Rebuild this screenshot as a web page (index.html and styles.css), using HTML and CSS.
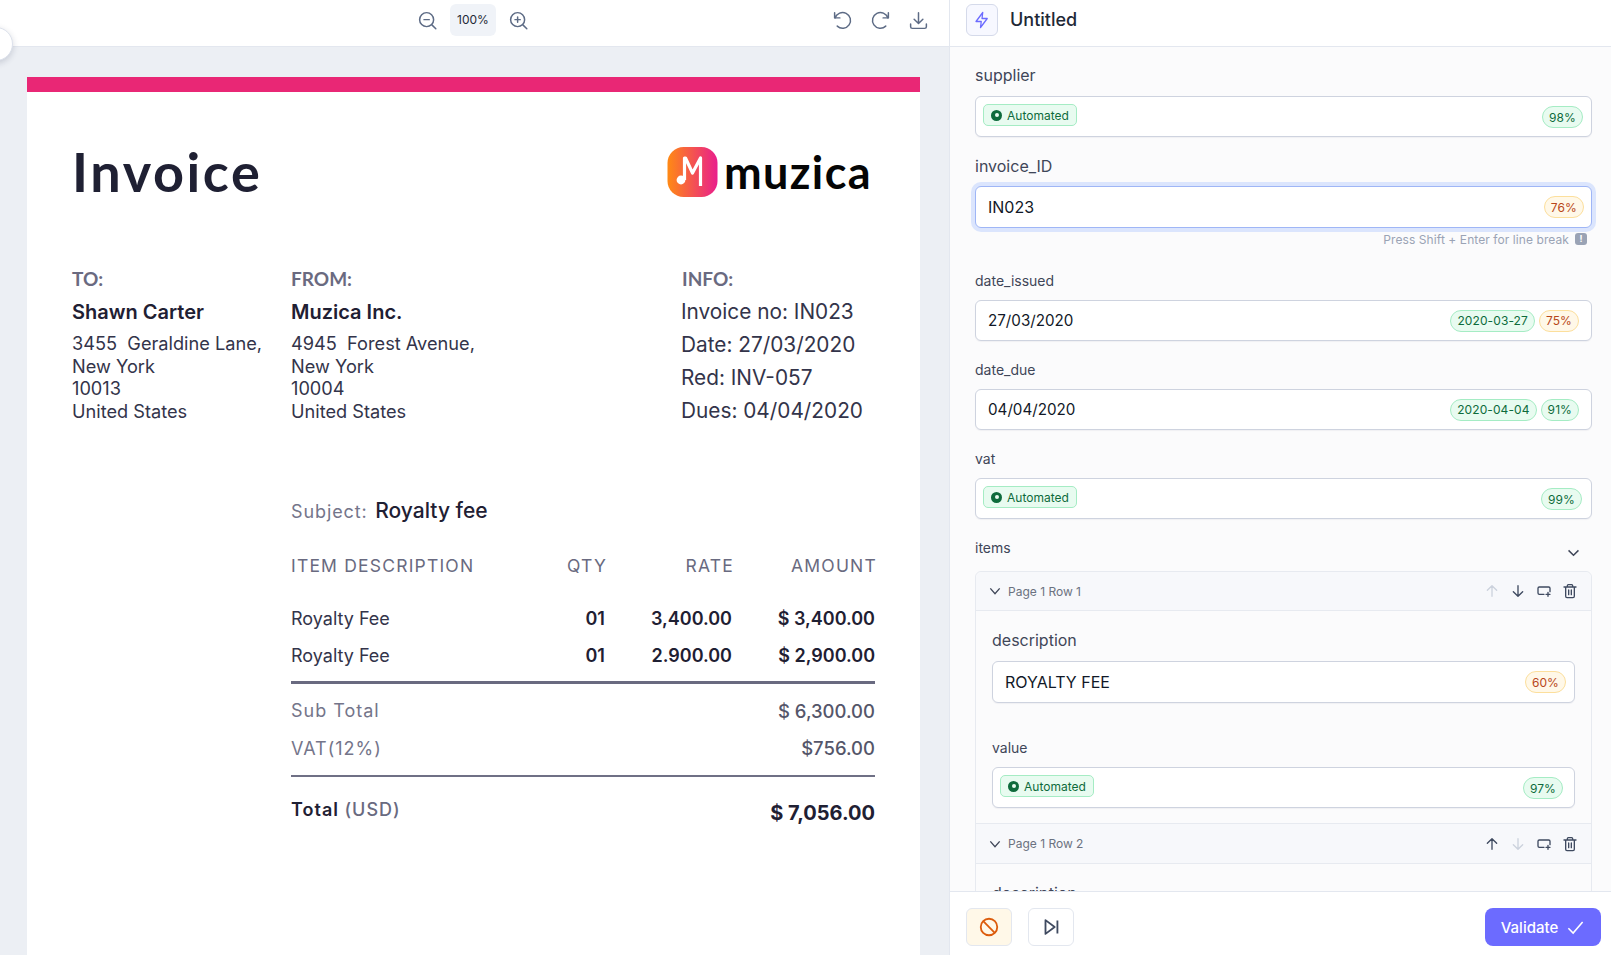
FILE: index.html
```html
<!DOCTYPE html>
<html lang="en">
<head>
    <meta charset="UTF-8">
    <meta name="viewport" content="width=device-width, initial-scale=1.0">
    <title>Invoice review</title>
    <link rel="stylesheet" href="styles.css">
</head>
<body>
    <div class="app">
        <section class="viewer">
            <div class="collapse-handle"></div>
            <div class="toolbar">
                <div class="zoom-tools">
                    <svg class="tool-icon" viewBox="0 0 24 24"><circle cx="11" cy="11" r="8"/><path d="M8 11h6M17 17l4.5 4.5"/></svg>
                    <span class="zoom-value">100%</span>
                    <svg class="tool-icon" viewBox="0 0 24 24"><circle cx="11" cy="11" r="8"/><path d="M8 11h6M11 8v6M17 17l4.5 4.5"/></svg>
                </div>
                <div class="page-tools">
                    <svg class="tool-icon" viewBox="0 0 24 24"><path d="M3 3v6h6"/><path d="M3.6 9A9 9 0 1 1 6 18.4"/></svg>
                    <svg class="tool-icon" viewBox="0 0 24 24"><path d="M21 3v6h-6"/><path d="M20.4 9A9 9 0 1 0 18 18.4"/></svg>
                    <svg class="tool-icon" viewBox="0 0 24 24"><path d="M12 3v12M7 10.5l5 5 5-5"/><path d="M3 16v3a2 2 0 0 0 2 2h14a2 2 0 0 0 2-2v-3"/></svg>
                </div>
            </div>
            <div class="canvas">
                <div class="invoice">
                    <div class="invoice-bar"></div>
                    <div class="invoice-body">
                        <div class="invoice-top">
                            <h1 class="invoice-title">Invoice</h1>
                            <div class="logo">
                                <svg class="logo-mark" viewBox="0 0 50 50">
                                    <defs>
                                        <linearGradient id="logo-grad" x1="0" y1="0" x2="1" y2="0">
                                            <stop offset="0" stop-color="#ff8a14"/>
                                            <stop offset="1" stop-color="#e91e8c"/>
                                        </linearGradient>
                                    </defs>
                                    <rect width="50" height="50" rx="16" fill="url(#logo-grad)"/>
                                    <path d="M17 33V11h1l7 15 8-15v28" fill="none" stroke="#fff" stroke-width="3.2" stroke-linejoin="round"/>
                                    <circle cx="13.500" cy="33" r="4.400" fill="#fff"/>
                                </svg>
                                <span class="logo-name">muzica</span>
                            </div>
                        </div>

                        <div class="parties">
                            <div>
                                <div class="party-head">TO:</div>
                                <div class="party-name">Shawn Carter</div>
                                <div class="party-addr">3455&nbsp; Geraldine Lane,<br>New York<br>10013<br>United States</div>
                            </div>
                            <div>
                                <div class="party-head">FROM:</div>
                                <div class="party-name">Muzica Inc.</div>
                                <div class="party-addr">4945&nbsp; Forest Avenue,<br>New York<br>10004<br>United States</div>
                            </div>
                            <div>
                                <div class="party-head">INFO:</div>
                                <div class="info-lines">Invoice no: IN023<br>Date: 27/03/2020<br>Red: INV-057<br>Dues: 04/04/2020</div>
                            </div>
                        </div>

                        <div class="subject"><span class="subject-label">Subject:</span> Royalty fee</div>

                        <table class="lines">
                            <thead>
                                <tr>
                                    <th>ITEM DESCRIPTION</th>
                                    <th class="num"><span class="th-text">QTY</span></th>
                                    <th class="num"><span class="th-text">RATE</span></th>
                                    <th class="num"><span class="th-text">AMOUNT</span></th>
                                </tr>
                            </thead>
                            <tbody>
                                <tr>
                                    <td>Royalty Fee</td>
                                    <td class="num strong">01</td>
                                    <td class="num strong">3,400.00</td>
                                    <td class="num strong">$ 3,400.00</td>
                                </tr>
                                <tr>
                                    <td>Royalty Fee</td>
                                    <td class="num strong">01</td>
                                    <td class="num strong">2.900.00</td>
                                    <td class="num strong">$ 2,900.00</td>
                                </tr>
                            </tbody>
                        </table>

                        <div class="totals">
                            <div class="total-row"><span class="total-label">Sub Total</span><span class="total-value">$ 6,300.00</span></div>
                            <div class="total-row"><span class="total-label">VAT(12%)</span><span class="total-value">$756.00</span></div>
                        </div>
                        <div class="grand-total">
                            <span class="grand-label">Total <span class="grand-unit">(USD)</span></span>
                            <span class="grand-value">$ 7,056.00</span>
                        </div>
                    </div>
                </div>
            </div>
        </section>

        <aside class="sidebar">
            <div class="side-head">
                <span class="bolt-box">
                    <svg viewBox="0 0 24 24"><path d="M13 2 4 14h7l-1 8 9-12h-7z"/></svg>
                </span>
                <span class="doc-name">Untitled</span>
            </div>

            <div class="side-scroll">
                <label class="label label-big label-first">supplier</label>
                <div class="box box-auto">
                    <span class="auto-tag"><i class="auto-dot"></i>Automated</span>
                    <span class="pill good pill-supplier">98%</span>
                </div>

                <label class="label label-big label-invoice">invoice_ID</label>
                <div class="box box-focus">
                    <span class="box-text">IN023</span>
                    <span class="pill warn pill-invoice">76%</span>
                </div>
                <div class="hint">Press Shift + Enter for line break <i class="hint-key">!</i></div>

                <label class="label label-issued">date_issued</label>
                <div class="box">
                    <span class="box-text">27/03/2020</span>
                    <span class="pill good">2020-03-27</span>
                    <span class="pill warn">75%</span>
                </div>

                <label class="label">date_due</label>
                <div class="box">
                    <span class="box-text">04/04/2020</span>
                    <span class="pill good">2020-04-04</span>
                    <span class="pill good">91%</span>
                </div>

                <label class="label">vat</label>
                <div class="box box-auto">
                    <span class="auto-tag"><i class="auto-dot"></i>Automated</span>
                    <span class="pill good pill-vat">99%</span>
                </div>

                <div class="items-head">
                    <label class="label label-items">items</label>
                    <svg class="items-chev" viewBox="0 0 24 24"><path d="m5 9 7 7 7-7"/></svg>
                </div>

                <div class="items-card">
                    <div class="row-head">
                        <svg class="row-chev" viewBox="0 0 24 24"><path d="m5 8 7 8 7-8"/></svg>
                        <span class="row-title">Page 1 Row 1</span>
                        <div class="row-tools">
                            <svg class="row-icon muted" viewBox="0 0 24 24"><path d="M12 20V5M5 11l7-7 7 7"/></svg>
                            <svg class="row-icon" viewBox="0 0 24 24"><path d="M12 4v15M5 13l7 7 7-7"/></svg>
                            <svg class="row-icon" viewBox="0 0 24 24"><path d="M12 17H5a2 2 0 0 1-2-2V8a2 2 0 0 1 2-2h14a2 2 0 0 1 2 2v5"/><path d="M18 14v6M15 17h6"/></svg>
                            <svg class="row-icon" viewBox="0 0 24 24"><path d="M3 6h18M8 6V4a1.5 1.5 0 0 1 1.5-1.5h5A1.5 1.5 0 0 1 16 4v2M5.5 6v14A2 2 0 0 0 7.500 22h9a2 2 0 0 0 2-2V6M10 10.500v7M14 10.500v7"/></svg>
                        </div>
                    </div>
                    <div class="row-body">
                        <label class="label label-big label-desc">description</label>
                        <div class="box box-tall">
                            <span class="box-text">ROYALTY FEE</span>
                            <span class="pill warn pill-desc">60%</span>
                        </div>
                        <label class="label label-value">value</label>
                        <div class="box box-auto">
                            <span class="auto-tag"><i class="auto-dot"></i>Automated</span>
                            <span class="pill good">97%</span>
                        </div>
                    </div>
                    <div class="row-head row-head-2">
                        <svg class="row-chev" viewBox="0 0 24 24"><path d="m5 8 7 8 7-8"/></svg>
                        <span class="row-title">Page 1 Row 2</span>
                        <div class="row-tools">
                            <svg class="row-icon" viewBox="0 0 24 24"><path d="M12 20V5M5 11l7-7 7 7"/></svg>
                            <svg class="row-icon muted" viewBox="0 0 24 24"><path d="M12 4v15M5 13l7 7 7-7"/></svg>
                            <svg class="row-icon" viewBox="0 0 24 24"><path d="M12 17H5a2 2 0 0 1-2-2V8a2 2 0 0 1 2-2h14a2 2 0 0 1 2 2v5"/><path d="M18 14v6M15 17h6"/></svg>
                            <svg class="row-icon" viewBox="0 0 24 24"><path d="M3 6h18M8 6V4a1.5 1.5 0 0 1 1.5-1.5h5A1.5 1.5 0 0 1 16 4v2M5.5 6v14A2 2 0 0 0 7.500 22h9a2 2 0 0 0 2-2V6M10 10.500v7M14 10.500v7"/></svg>
                        </div>
                    </div>
                    <div class="row-body">
                        <label class="label label-big label-desc">description</label>
                    </div>
                </div>
            </div>

            <div class="side-foot">
                <button class="foot-btn foot-block" type="button">
                    <svg viewBox="0 0 24 24"><circle cx="12" cy="12" r="9"/><path d="m5.700 5.700 12.600 12.600"/></svg>
                </button>
                <button class="foot-btn foot-skip" type="button">
                    <svg viewBox="0 0 24 24"><path d="M6 4.500v15L16 12zM19 5v14"/></svg>
                </button>
                <button class="validate" type="button">
                    Validate
                    <svg viewBox="0 0 24 24"><path d="m3 13 6 6L21 5"/></svg>
                </button>
            </div>
        </aside>
    </div>
</body>
</html>
```

FILE: styles.css
```css
* {
    box-sizing: border-box;
}
html, body {
    margin: 0;
    padding: 0;
    height: 100%;
    overflow: hidden;
}
body {
    font-family: Inter, "Liberation Sans", sans-serif;
    color: #1f2033;
    background: #fff;
}
.app {
    display: flex;
    height: 955px;
}

/* left: document viewer */
.viewer {
    position: relative;
    width: 950px;
    flex-shrink: 0;
    display: flex;
    flex-direction: column;
    border-right: 1px solid #e3e7ef;
    overflow: hidden;
}
.collapse-handle {
    position: absolute;
    left: -21px;
    top: 27px;
    width: 34px;
    height: 34px;
    border-radius: 50%;
    background: #fff;
    border: 1px solid #dde2ec;
    box-shadow: 0 2px 6px rgba(30, 40, 70, 0.18);
    z-index: 2;
}
.toolbar {
    height: 47px;
    flex-shrink: 0;
    display: flex;
    align-items: center;
    padding: 0 20px 6px 417px;
    background: #fff;
    border-bottom: 1px solid #e3e7ef;
}
.zoom-tools {
    display: flex;
    align-items: center;
    gap: 12px;
}
.page-tools {
    margin-left: auto;
    display: flex;
    align-items: center;
    gap: 17px;
}
.tool-icon {
    width: 21px;
    height: 21px;
    fill: none;
    stroke: #5d6b85;
    stroke-width: 1.7;
    stroke-linecap: round;
    stroke-linejoin: round;
}
.zoom-value {
    width: 46px;
    height: 32px;
    line-height: 32px;
    text-align: center;
    font-size: 12px;
    color: #1f2937;
    background: #f0f3f8;
    border-radius: 6px;
}
.canvas {
    flex: 1;
    background: #eceff4;
    padding: 30px 0 0 27px;
    overflow: hidden;
}
.invoice {
    width: 893px;
    min-height: 900px;
    background: #fff;
}
.invoice-bar {
    height: 15px;
    background: #e92775;
}
.invoice-body {
    padding: 0 45px;
}
.invoice-top {
    display: flex;
    justify-content: space-between;
    align-items: center;
    padding-top: 54px;
    height: 105px;
}
.invoice-title {
    margin: 0;
    font-family: Lato, sans-serif;
    font-size: 54px;
    font-weight: 700;
    letter-spacing: 2.6px;
    line-height: 50px;
    color: #1f2033;
}
.logo {
    display: flex;
    align-items: center;
    gap: 6px;
    margin-right: 3px;
}
.logo-mark {
    width: 51px;
    height: 50px;
}
.logo-name {
    font-family: Lato, sans-serif;
    font-size: 45px;
    font-weight: 700;
    letter-spacing: 1.4px;
    line-height: 50px;
    color: #050505;
}
.parties {
    display: grid;
    grid-template-columns: 219px 391px 1fr;
    margin-top: 70px;
}
.party-head {
    font-family: Lato, sans-serif;
    font-size: 19px;
    font-weight: 700;
    line-height: 24px;
    color: #6a6a80;
}
.party-name {
    margin-top: 9px;
    font-size: 20px;
    font-weight: 600;
    line-height: 24px;
}
.party-addr {
    margin-top: 8px;
    font-size: 18.200px;
    line-height: 22.6px;
    color: #33344a;
}
.info-lines {
    margin-top: 4px;
    margin-left: -1px;
    font-size: 20.800px;
    line-height: 33px;
    color: #33344a;
}
.subject {
    margin: 69px 0 0 219px;
    font-size: 21px;
    font-weight: 500;
    line-height: 30px;
}
.subject-label {
    font-size: 18px;
    font-weight: 400;
    letter-spacing: 0.9px;
    color: #74758a;
    margin-right: 2px;
}
.lines {
    width: 584px;
    margin-left: 219px;
    margin-top: 25px;
    border-collapse: collapse;
    table-layout: fixed;
    border-bottom: 3px solid #696a80;
}
.lines th {
    font-size: 17.500px;
    font-weight: 400;
    letter-spacing: 1.2px;
    color: #696a80;
    text-align: left;
    padding: 0 0 22px;
    height: 48px;
}
.th-text {
    display: inline-block;
    margin-right: -2px;
}
.lines th:nth-child(1) {
    width: 254px;
}
.lines th:nth-child(2) {
    width: 60px;
}
.lines th:nth-child(3) {
    width: 127px;
}
.lines th:nth-child(4) {
    width: 143px;
}
.lines td {
    font-size: 18px;
    height: 37.500px;
    padding: 0;
    color: #33344a;
}
.lines tbody tr:last-child td {
    height: 45px;
    padding-bottom: 8px;
}
.lines .num {
    text-align: right;
}
.lines .strong {
    font-weight: 600;
    color: #1f2033;
    font-size: 18px;
}
.totals {
    padding-top: 8px;
    margin-left: 219px;
    border-bottom: 2px solid #6f7085;
    padding-bottom: 8px;
}
.total-row {
    display: flex;
    justify-content: space-between;
    align-items: center;
    height: 37.500px;
}
.total-label {
    font-size: 18px;
    letter-spacing: 1px;
    color: #74758a;
}
.total-value {
    font-size: 18.500px;
    font-weight: 500;
    color: #55566a;
}
.grand-total {
    margin: 19px 0 0 219px;
    display: flex;
    justify-content: space-between;
    line-height: 28px;
}
.grand-label {
    font-size: 18px;
    font-weight: 600;
    letter-spacing: 1px;
}
.grand-unit {
    color: #696a80;
    font-weight: 500;
}
.grand-value {
    font-size: 20px;
    font-weight: 700;
    margin-top: 3px;
}

/* right: extracted fields */
.sidebar {
    flex: 1;
    min-width: 0;
    display: flex;
    flex-direction: column;
    background: #fbfbfc;
}
.side-head {
    height: 47px;
    flex-shrink: 0;
    display: flex;
    align-items: center;
    gap: 12px;
    padding: 0 16px 6px;
    background: #fff;
    border-bottom: 1px solid #e3e7ef;
}
.bolt-box {
    width: 32px;
    height: 32px;
    display: flex;
    align-items: center;
    justify-content: center;
    background: #f7f8ff;
    border: 1px solid #d5daea;
    border-radius: 6px;
}
.bolt-box svg {
    width: 18px;
    height: 18px;
    fill: none;
    stroke: #6c6bff;
    stroke-width: 1.7;
    stroke-linejoin: round;
}
.doc-name {
    font-size: 18px;
    font-weight: 500;
    color: #1f2937;
    margin-top: -2px;
}
.side-scroll {
    flex: 1;
    overflow: hidden;
    padding: 0 19px 0 25px;
}
.label {
    display: block;
    font-size: 14px;
    line-height: 20px;
    color: #3f4658;
    margin-top: 19px;
    margin-bottom: 9px;
}
.label-big {
    font-size: 16px;
}
.label-first {
    margin-top: 18px;
    margin-bottom: 11px;
}
.label-invoice {
    margin-top: 19px;
    margin-bottom: 10px;
}
.label-issued {
    margin-top: 24px;
}
.box {
    height: 41px;
    display: flex;
    align-items: center;
    gap: 4px;
    padding: 0 12px;
    background: #fff;
    border: 1px solid #ced3df;
    border-radius: 6px;
    box-shadow: 0 1px 1px rgba(30, 40, 70, 0.05);
}
.box-text {
    flex: 1;
    font-size: 15.200px;
    color: #111827;
}
.box-focus {
    height: 42px;
    border-color: #9fb6f6;
    box-shadow: 0 0 0 4px #dbe5fd;
}
.box-focus .box-text {
    font-size: 16px;
}
.box-auto {
    padding: 7px 11px 0 7px;
    justify-content: space-between;
    align-items: flex-start;
}
.box-tall {
    height: 42px;
}
.box-tall .box-text {
    font-size: 16px;
}
.auto-tag {
    display: flex;
    align-items: center;
    gap: 5px;
    height: 22px;
    padding: 0 7px;
    font-size: 12px;
    color: #0e6b3c;
    background: #e8fbf0;
    border: 1px solid #a5ecc4;
    border-radius: 5px;
}
.auto-dot {
    width: 11px;
    height: 11px;
    border-radius: 50%;
    background: #0e6b3c;
    position: relative;
}
.auto-dot::after {
    content: "";
    position: absolute;
    left: 3.500px;
    top: 3.500px;
    width: 4px;
    height: 4px;
    border-radius: 50%;
    background: #e8fbf0;
}
.pill {
    display: inline-flex;
    align-items: center;
    height: 22px;
    padding: 0 6px;
    font-size: 12px;
    letter-spacing: 0.1px;
    border-radius: 11px;
    border: 1px solid;
    white-space: nowrap;
}
.pill.good {
    color: #0e6b3c;
    background: #e8fbf0;
    border-color: #a5ecc4;
}
.pill.warn {
    color: #b8471a;
    background: #fff8e8;
    border-color: #fcdf9c;
}
.box-auto .pill {
    margin-top: 2px;
}
.pill-supplier {
    margin-right: -3px;
}
.pill-vat {
    margin-right: -2px;
}
.pill-invoice {
    margin-right: -5px;
}
.pill-desc {
    margin-right: -4px;
}
.hint {
    display: flex;
    justify-content: flex-end;
    align-items: center;
    gap: 6px;
    height: 16px;
    margin-top: 3px;
    padding-right: 5px;
    font-size: 12px;
    letter-spacing: 0.08px;
    color: #9aa3b5;
}
.hint-key {
    width: 12px;
    height: 12px;
    line-height: 12px;
    text-align: center;
    font-size: 9px;
    font-style: normal;
    font-weight: 700;
    color: #fff;
    background: #9aa3b5;
    border-radius: 3px;
}
.items-head {
    display: flex;
    justify-content: space-between;
    align-items: flex-start;
}
.items-chev {
    width: 17px;
    height: 17px;
    margin: 25px 10px 0 0;
    fill: none;
    stroke: #3f4658;
    stroke-width: 2;
}
.items-card {
    border: 1px solid #e7eaf0;
    border-radius: 6px 6px 0 0;
    margin-top: 4px;
}
.row-head {
    height: 39px;
    display: flex;
    align-items: center;
    padding: 0 13px 0 11px;
    background: #f7f8fb;
    border-bottom: 1px solid #e7eaf0;
    border-radius: 6px 6px 0 0;
}
.row-head-2 {
    height: 41px;
    border-top: 1px solid #e7eaf0;
    border-radius: 0;
}
.row-chev {
    width: 16px;
    height: 16px;
    fill: none;
    stroke: #3f4658;
    stroke-width: 2;
}
.row-title {
    margin-left: 5px;
    font-size: 12px;
    color: #6b7280;
}
.row-tools {
    margin-left: auto;
    display: flex;
    align-items: center;
    gap: 10px;
}
.row-icon {
    width: 16px;
    height: 16px;
    fill: none;
    stroke: #3f4a60;
    stroke-width: 2;
    stroke-linecap: round;
    stroke-linejoin: round;
}
.row-icon.muted {
    stroke: #ccd2dd;
}
.row-body {
    padding: 0 16px 15px;
}
.label-desc {
    margin-top: 19px;
    margin-bottom: 11px;
}
.label-value {
    margin-top: 35px;
}
.side-foot {
    height: 64px;
    flex-shrink: 0;
    display: flex;
    align-items: flex-start;
    gap: 16px;
    padding: 16px 10px 0 16px;
    background: #fff;
    border-top: 1px solid #e3e7ef;
}
.foot-btn {
    width: 46px;
    height: 38px;
    display: flex;
    align-items: center;
    justify-content: center;
    padding: 0;
    background: #fff;
    border: 1px solid #e3e7ef;
    border-radius: 6px;
}
.foot-btn svg {
    width: 22px;
    height: 22px;
    fill: none;
    stroke-width: 2;
    stroke-linejoin: round;
}
.foot-block {
    background: #fff8e8;
}
.foot-block svg {
    stroke: #dc5c0c;
}
.foot-skip svg {
    stroke: #3f4a60;
}
.validate {
    margin-left: auto;
    width: 116px;
    height: 38px;
    display: flex;
    align-items: center;
    justify-content: center;
    gap: 8px;
    padding: 0;
    font-family: inherit;
    font-size: 15px;
    font-weight: 500;
    color: #fff;
    background: #6c6bff;
    border: none;
    border-radius: 8px;
}
.validate svg {
    width: 19px;
    height: 19px;
    fill: none;
    stroke: #fff;
    stroke-width: 2;
}
```
